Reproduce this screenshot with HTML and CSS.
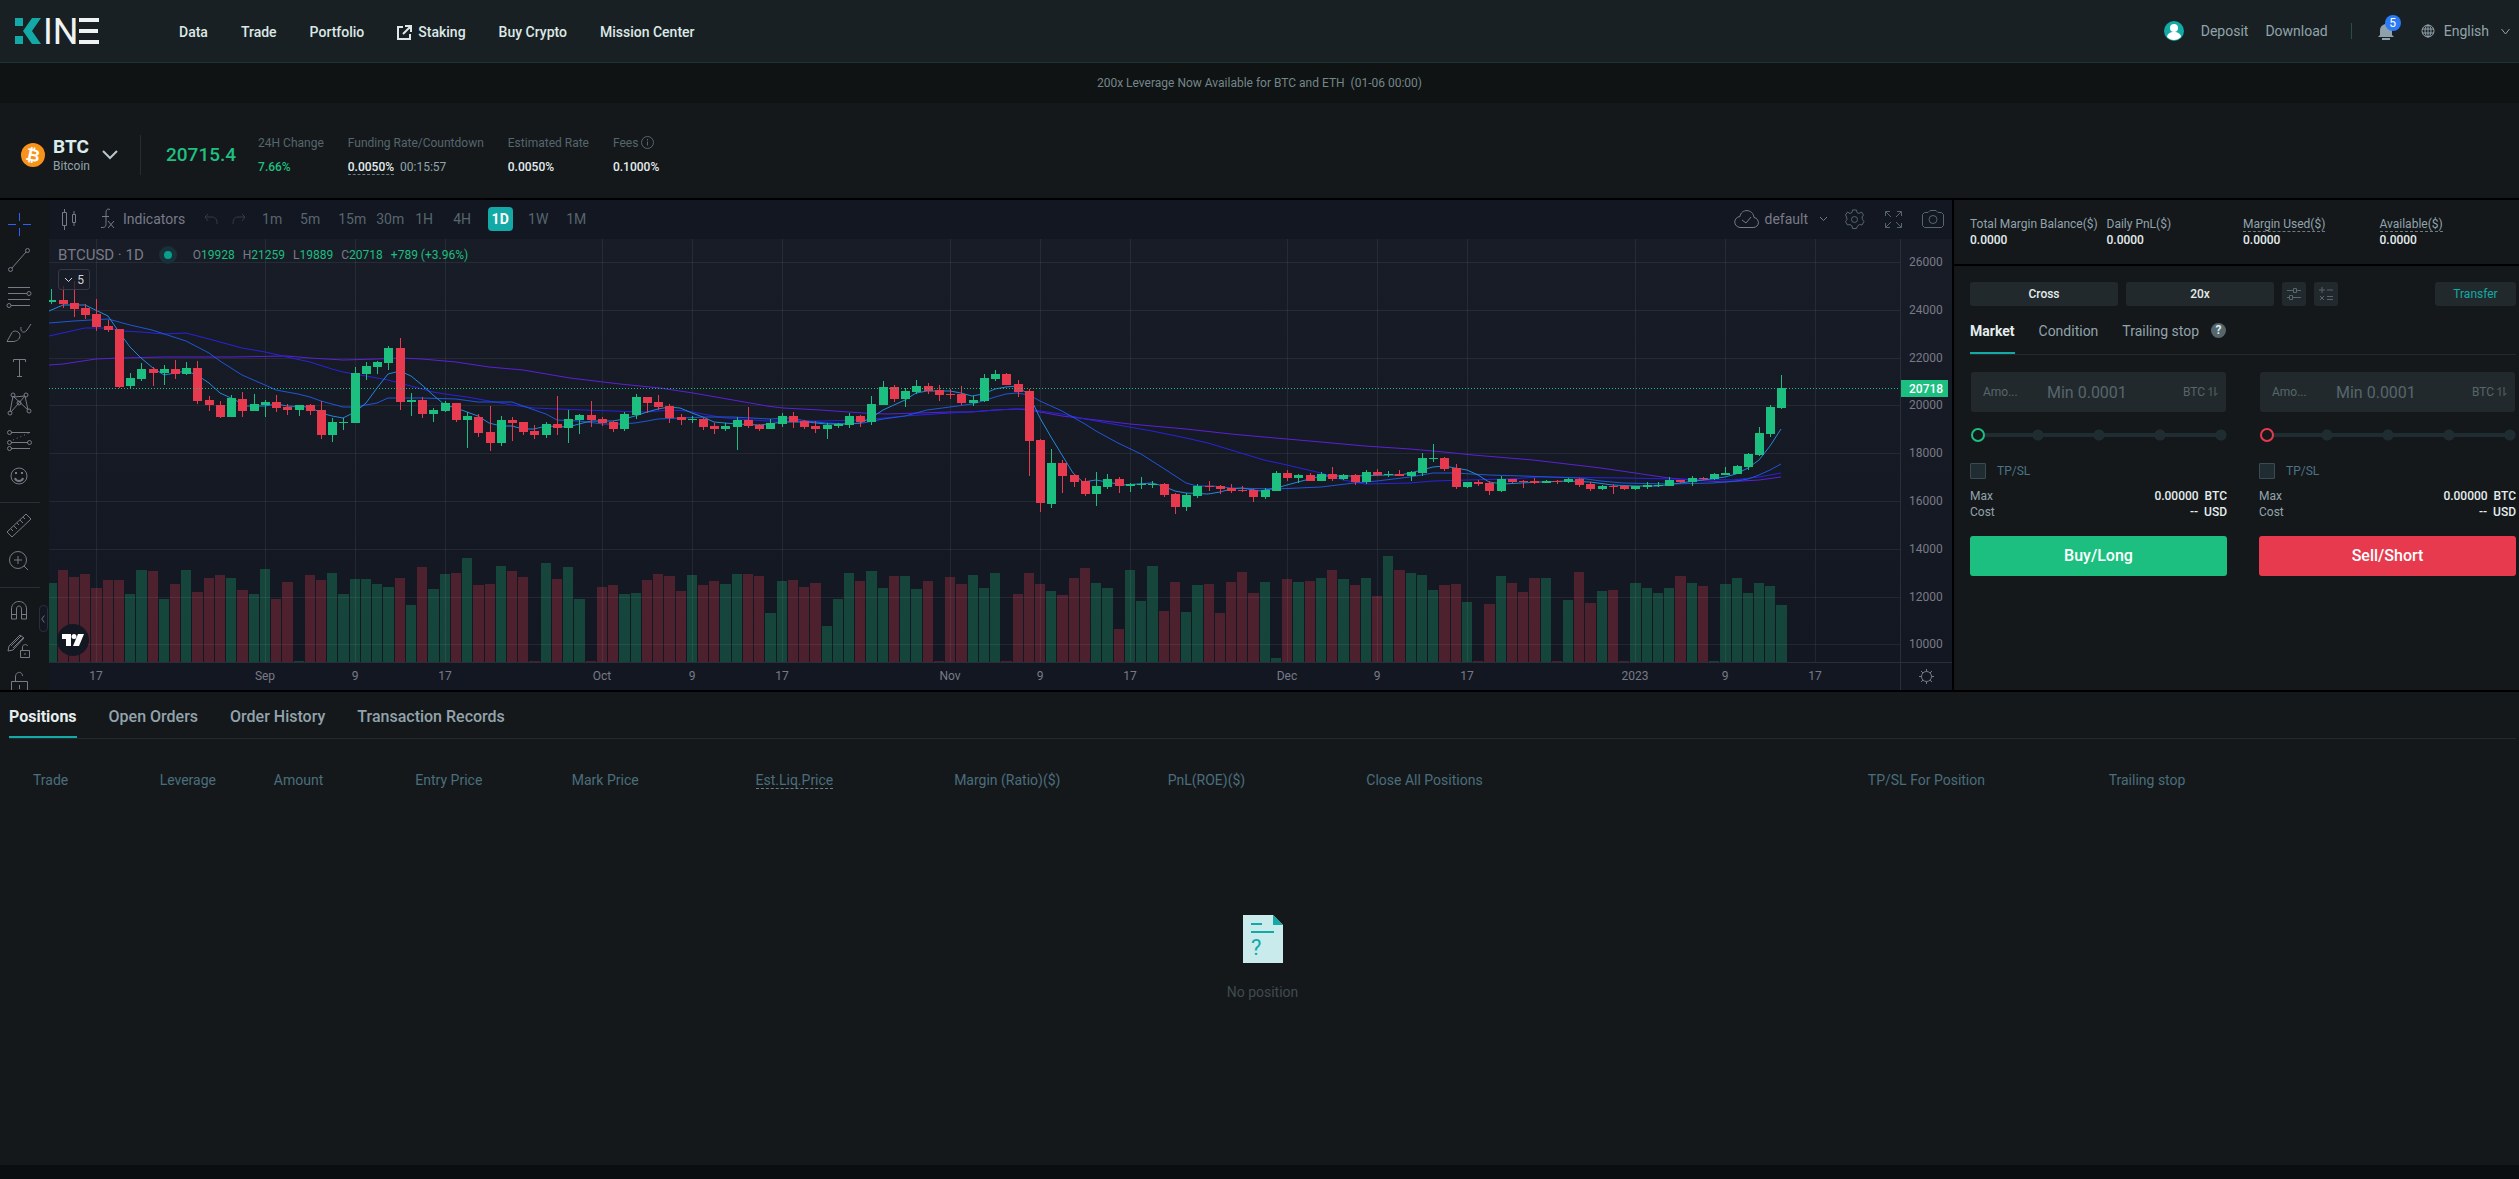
FILE: index.html
```html
<!DOCTYPE html>
<html lang="en">
<head>
    <meta charset="UTF-8">
    <meta name="viewport" content="width=device-width, initial-scale=1.0">
    <title>BTC 20715.4 | Kine</title>
    <link rel="stylesheet" href="styles.css">
</head>
<body>
    <header class="site-header">
        <a href="#" class="logo" aria-label="Kine">
            <svg width="86" height="28" viewBox="0 0 86 28">
                <path fill="#12a9a6" d="M0 1h8v8H0zM0 19h8v8H0zM17 1h9l-9 13 9 13h-9L8 14z"/>
                <text x="28" y="27" class="logo-text">IN</text>
                <path fill="#eef3f3" d="M64 1h20v4H64zM64 12h19v4H64zM64 23h20v4H64z"/>
            </svg>
        </a>
        <nav class="main-nav">
            <a href="#">Data</a>
            <a href="#">Trade</a>
            <a href="#">Portfolio</a>
            <a href="#" class="with-icon">
                <svg width="15" height="15" viewBox="0 0 15 15" fill="none" stroke="currentColor" stroke-width="2"><path d="M6 2H1v12h12V9M8 1h6v6M14 1L6 9"/></svg>
                Staking
            </a>
            <a href="#">Buy Crypto</a>
            <a href="#">Mission Center</a>
        </nav>
        <div class="user-nav">
            <a href="#" class="avatar" aria-label="Account">
                <svg width="20" height="20" viewBox="0 0 20 20"><circle cx="10" cy="10" r="10" fill="#12a9a6"/><circle cx="10" cy="7" r="4" fill="#fff"/><path d="M3 16c0-3 3-5 7-5s7 2 7 5c-2 2-4 3-7 3s-5-1-7-3z" fill="#fff"/></svg>
            </a>
            <a href="#">Deposit</a>
            <a href="#">Download</a>
            <span class="nav-divider"></span>
            <button class="bell" aria-label="Notifications">
                <svg width="16" height="18" viewBox="0 0 16 18" fill="#8fa1aa"><path d="M7 1h2v1c3 1 5 3 5 6v5l2 2H0l2-2V8c0-3 2-5 5-6zM4 16h8v2H4z"/></svg>
                <span class="bell-count">5</span>
            </button>
            <button class="language">
                <svg width="14" height="14" viewBox="0 0 14 14" fill="none" stroke="currentColor"><circle cx="7" cy="7" r="6"/><ellipse cx="7" cy="7" rx="3" ry="6"/><path d="M1 5h12M1 9h12M7 1v12"/></svg>
                English
                <svg class="language-arrow" width="9" height="7" viewBox="0 0 9 7" fill="none" stroke="currentColor"><path d="M0.500 1l4 5 4-5"/></svg>
            </button>
        </div>
    </header>

    <div class="announcement">200x Leverage Now Available for BTC and ETH&nbsp; (01-06 00:00)</div>

    <section class="ticker">
        <button class="pair">
            <svg width="24" height="24" viewBox="0 0 24 24"><circle cx="12" cy="12" r="12" fill="#f7931a"/><text x="12" y="18" class="coin-sign" transform="rotate(12 12 12)">₿</text></svg>
            <span class="pair-name">
                <strong>BTC</strong>
                <span>Bitcoin</span>
            </span>
            <svg class="pair-arrow" width="16" height="10" viewBox="0 0 16 10" fill="none" stroke="currentColor" stroke-width="2"><path d="M1 1l7 7 7-7"/></svg>
        </button>
        <span class="ticker-divider"></span>
        <span class="last-price">20715.4</span>
        <dl class="ticker-stats">
            <div><dt>24H Change</dt><dd class="up">7.66%</dd></div>
            <div><dt>Funding Rate/Countdown</dt><dd><span class="hint">0.0050%</span><span class="countdown">00:15:57</span></dd></div>
            <div><dt>Estimated Rate</dt><dd>0.0050%</dd></div>
            <div><dt>Fees <svg width="13" height="13" viewBox="0 0 13 13" fill="none" stroke="currentColor"><circle cx="6.500" cy="6.500" r="6"/><path d="M6.500 5.500v4M6.500 3v1.500"/></svg></dt><dd>0.1000%</dd></div>
        </dl>
    </section>

    <main class="workspace">
        <section class="chart">
            <div class="draw-tools">
                <button aria-label="Cross"><svg class="cross" viewBox="0 0 28 28"><path d="M14.500 3v8M14.500 18v8M3 14.500h8M18 14.500h8"/></svg></button>
                <button aria-label="Trend line"><svg viewBox="0 0 28 28"><path d="M7 22L21 6"/><circle cx="5.500" cy="23.500" r="2"/><circle cx="22.500" cy="4.500" r="2"/></svg></button>
                <button aria-label="Fib retracement"><svg viewBox="0 0 28 28"><path d="M3 5.500h22M3 11.500h19M3 17.500h22M6 23.500h19"/><circle cx="24" cy="11.500" r="2"/><circle cx="4" cy="23.500" r="2"/></svg></button>
                <button aria-label="Brush"><svg viewBox="0 0 28 28"><path d="M2 23.500l5-9c2-3 8-1 8 3s-4 6-7 6zM16 9c-1 5 3 7 6 3l4-6"/></svg></button>
                <button aria-label="Text"><svg viewBox="0 0 28 28"><path d="M8.500 8V5.500h12V8M14.500 5.500v17M12 22.500h5"/></svg></button>
                <button aria-label="Pattern"><svg viewBox="0 0 28 28"><path d="M5 22L8 6l15 14L20 6 6 22M9 7l11-1"/><circle cx="8" cy="5" r="2"/><circle cx="21" cy="5" r="2"/><circle cx="5" cy="23" r="2"/><circle cx="24" cy="21" r="2"/><circle cx="14" cy="13" r="2"/></svg></button>
                <button aria-label="Prediction"><svg viewBox="0 0 28 28"><path d="M6 6.500h19M6 16.500h17M6 22.500h19"/><path d="M8 14L24 7" stroke-dasharray="1 3"/><circle cx="4.500" cy="6.500" r="2"/><circle cx="4.500" cy="16.500" r="2"/><circle cx="4.500" cy="22.500" r="2"/><circle cx="24.500" cy="16.500" r="2"/></svg></button>
                <button aria-label="Icons"><svg viewBox="0 0 28 28"><circle cx="14" cy="14" r="8"/><path d="M10 16c1 4 7 4 8 0M11 10v2M17 10v2" stroke-width="2"/></svg></button>
                <hr>
                <button aria-label="Measure"><svg viewBox="0 0 28 28"><path d="M2 21L21 3l5 5L7 26zM6 18l2 2M9 15l3 3M12 12l2 2M15 9l3 3M18 6l2 2"/></svg></button>
                <button aria-label="Zoom in"><svg viewBox="0 0 28 28"><circle cx="13" cy="13" r="8.500"/><path d="M13 9v8M9 13h8M19 19l4 4"/></svg></button>
                <hr>
                <button aria-label="Magnet"><svg viewBox="0 0 28 28"><path d="M6.500 23V13c0-10 15-10 15 0v10h-5V13c0-4-5-4-5 0v10zM6.500 18.500h5M16.500 18.500h5"/></svg></button>
                <button aria-label="Keep drawing"><svg viewBox="0 0 28 28"><path d="M4 14L15 3l4 3L8 18l-5 1zM6 14l10-10M8 16L18 6M15.500 18.500h9v7h-9zM17.500 18v-3c0-3 5-3 5-1M20 21v2"/></svg></button>
                <button aria-label="Lock drawings"><svg viewBox="0 0 28 28"><path d="M6.500 13.500h16v12h-16zM10.500 13V9c0-6 7-6 7-1M14.500 17v4"/></svg></button>
                <button class="fold" aria-label="Hide drawing tools"><svg viewBox="0 0 8 10"><path d="M5 1L2 5l3 4"/></svg></button>
            </div>

            <div class="chart-body">
                <div class="chart-toolbar">
                    <button class="candle-type" aria-label="Candles"><svg width="16" height="22" viewBox="0 0 16 22"><path d="M1.500 4.500h4v13h-4zM3.500 1v3M3.500 18v4M11.500 6.500h3v8h-3zM13 3v3M13 15v3"/></svg></button>
                    <button class="indicators">
                        <svg width="16" height="22" viewBox="0 0 16 22"><path d="M10 1.500c-3-1-4 0-4 4v10c0 4-2 4-5 4M2 8.500h7M8 13l6 7M14 13l-6 7"/></svg>
                        Indicators
                    </button>
                    <button class="history" aria-label="Undo"><svg width="14" height="12" viewBox="0 0 14 12"><path d="M4 1L1 4l3 4M1 4h7c4 0 5 3 5 7"/></svg></button>
                    <button class="history" aria-label="Redo"><svg width="14" height="12" viewBox="0 0 14 12"><path d="M10 1l3 3-3 4M13 4H6c-4 0-5 3-5 7"/></svg></button>
                    <div class="intervals">
                        <button>1m</button>
                        <button>5m</button>
                        <button class="wide">15m</button>
                        <button class="tight">30m</button>
                        <button>1H</button>
                        <button>4H</button>
                        <button class="active"><span>1D</span></button>
                        <button>1W</button>
                        <button>1M</button>
                    </div>
                    <div class="chart-actions">
                        <button class="layout-name">
                            <svg width="25" height="20" viewBox="0 0 25 20"><path d="M6 18.500h13c7 0 7-9 1-10-1-9-13-9-14-1-7 1-7 10 0 11zM8 11l4 3 5-6"/></svg>
                            default
                            <svg width="9" height="6" viewBox="0 0 9 6"><path d="M1 1l3.500 3.500L8 1"/></svg>
                        </button>
                        <button aria-label="Settings"><svg width="21" height="21" viewBox="0 0 21 21"><path d="M8.500 1h4l.5 2.500 2 1 2.500-1.500 2 3-1.500 2 .5 2.500 1.500 2-2 3.500-2.500-.5-2 1.500-1 2.500h-4l-.5-2.500-2-1.500-2.500.5-2-3.500L3 10.500 2.500 8 1.500 6l2-3L6 4.500l2-1z"/><circle cx="10.500" cy="10.500" r="3"/></svg></button>
                        <button aria-label="Fullscreen"><svg width="17" height="17" viewBox="0 0 17 17"><path d="M.5 5V.5H5M12 .5h4.500V5M16.500 12v4.500H12M5 16.500H.5V12M1 1l5 5M16 1l-5 5M16 16l-5-5M1 16l5-5"/></svg></button>
                        <button aria-label="Snapshot"><svg width="22" height="18" viewBox="0 0 22 18"><path d="M2.500 2.500H6l2-2h6l2 2h3.500l2 2v11l-2 2h-17l-2-2v-11z"/><circle cx="11" cy="9.500" r="4"/></svg></button>
                    </div>
                </div>

                <div class="plot-row">
                    <div class="plot">
                        <svg id="plot" class="plot-svg"></svg>
                        <div class="legend">
                            <span class="legend-symbol">BTCUSD · 1D</span>
                            <span class="market-dot"></span>
                            <span>O<b>19928</b></span>
                            <span>H<b>21259</b></span>
                            <span>L<b>19889</b></span>
                            <span>C<b>20718</b></span>
                            <span><b>+789 (+3.96%)</b></span>
                        </div>
                        <button class="study-count">
                            <svg width="9" height="6" viewBox="0 0 9 6"><path d="M1 1l3.500 3.500L8 1"/></svg>
                            5
                        </button>
                        <a href="#" class="tv-badge" aria-label="TradingView"><svg width="22" height="12" viewBox="0 0 22 12" fill="#fff"><path d="M0 0h9v12H4V5H0zM16 0h6l-5 12h-6z"/><circle cx="12" cy="2.500" r="2.500"/></svg></a>
                    </div>
                    <svg id="price-axis" class="price-axis"></svg>
                </div>
                <div class="time-row">
                    <svg id="time-axis" class="time-axis"></svg>
                    <button class="axis-settings" aria-label="Axis settings"><svg width="15" height="15" viewBox="0 0 15 15"><circle cx="7.500" cy="7.500" r="5"/><path d="M7.500 0v2.500M7.500 12.500V15M0 7.500h2.500M12.500 7.500H15M2 2l2 2M11 11l2 2M2 13l2-2M11 4l2-2"/></svg></button>
                </div>
            </div>
        </section>

        <aside class="trade-panel">
            <dl class="balances">
                <div><dt>Total Margin Balance($)</dt><dd>0.0000</dd></div>
                <div><dt>Daily PnL($)</dt><dd>0.0000</dd></div>
                <div><dt><span class="hint">Margin Used($)</span></dt><dd>0.0000</dd></div>
                <div><dt><span class="hint">Available($)</span></dt><dd>0.0000</dd></div>
            </dl>

            <div class="order-panel">
                <div class="margin-row">
                    <button class="margin-mode">Cross</button>
                    <button class="margin-mode">20x</button>
                    <button class="tool-btn" aria-label="Preferences"><svg width="14" height="14" viewBox="0 0 14 14"><path d="M0 3.500h6M10 3.500h4M6.500 1.500h3v4h-3zM0 10.500h2M6 10.500h8M2.500 8.500h3v4h-3z"/></svg></button>
                    <button class="tool-btn" aria-label="Calculator"><svg width="14" height="14" viewBox="0 0 14 14"><path d="M0 3h6M3 0v6M8 3h6M1 9l4 4M5 9l-4 4M8 9.500h6M8 12.500h6"/></svg></button>
                    <button class="transfer">Transfer</button>
                </div>

                <div class="order-types">
                    <button class="active">Market</button>
                    <button>Condition</button>
                    <button>Trailing stop <span class="help">?</span></button>
                </div>

                <div class="order-forms">
                    <form class="order-form buy">
                        <div class="amount-box">
                            <label for="buyAmount">Amo...</label>
                            <input type="text" id="buyAmount" placeholder="Min 0.0001">
                            <button type="button">BTC <svg width="10" height="9" viewBox="0 0 10 9"><path d="M0.500 3l2.500-2.500V9M9.500 6L7 8.500V0"/></svg></button>
                        </div>
                        <input type="range" class="amount-slider" aria-label="Buy amount" min="0" max="100" value="0">
                        <label class="tpsl"><input type="checkbox"> TP/SL</label>
                        <div class="order-line"><span>Max</span><b>0.00000&nbsp; BTC</b></div>
                        <div class="order-line"><span>Cost</span><b>--&nbsp; USD</b></div>
                        <button type="submit" class="submit-btn">Buy/Long</button>
                    </form>
                    <form class="order-form sell">
                        <div class="amount-box">
                            <label for="sellAmount">Amo...</label>
                            <input type="text" id="sellAmount" placeholder="Min 0.0001">
                            <button type="button">BTC <svg width="10" height="9" viewBox="0 0 10 9"><path d="M0.500 3l2.500-2.500V9M9.500 6L7 8.500V0"/></svg></button>
                        </div>
                        <input type="range" class="amount-slider" aria-label="Sell amount" min="0" max="100" value="0">
                        <label class="tpsl"><input type="checkbox"> TP/SL</label>
                        <div class="order-line"><span>Max</span><b>0.00000&nbsp; BTC</b></div>
                        <div class="order-line"><span>Cost</span><b>--&nbsp; USD</b></div>
                        <button type="submit" class="submit-btn">Sell/Short</button>
                    </form>
                </div>
            </div>
        </aside>
    </main>

    <section class="positions">
        <div class="position-tabs">
            <button class="active">Positions</button>
            <button>Open Orders</button>
            <button>Order History</button>
            <button>Transaction Records</button>
        </div>
        <table class="position-table">
            <thead>
                <tr>
                    <th>Trade</th>
                    <th>Leverage</th>
                    <th>Amount</th>
                    <th>Entry Price</th>
                    <th>Mark Price</th>
                    <th><span class="hint">Est.Liq.Price</span></th>
                    <th>Margin (Ratio)($)</th>
                    <th>PnL(ROE)($)</th>
                    <th>Close All Positions</th>
                    <th>TP/SL For Position</th>
                    <th>Trailing stop</th>
                </tr>
            </thead>
        </table>
        <div class="empty">
            <svg width="40" height="48" viewBox="0 0 40 48"><path fill="#c9ebeb" d="M0 0h30l10 10v38H0z"/><path fill="#12a9a6" d="M30 0l10 10H30zM8 8h11v2H8zM8 16h23v2H8z"/><text x="8" y="40" class="empty-mark">?</text></svg>
            <p>No position</p>
        </div>
    </section>
    <div class="page-end"></div>

    <script src="chart.js"></script>
</body>
</html>
```
FILE: styles.css
```css
* {
    margin: 0;
    padding: 0;
    box-sizing: border-box;
}

body {
    font-family: Roboto, 'Liberation Sans', sans-serif;
    font-size: 12px;
    line-height: 16px;
    background: #000;
    color: #e4eded;
    min-height: 100vh;
    display: flex;
    flex-direction: column;
}

a {
    color: inherit;
    text-decoration: none;
}

button {
    font: inherit;
    color: inherit;
    background: none;
    border: none;
    cursor: pointer;
}

.hint {
    border-bottom: 1px dashed #6b7c83;
}

/* Header */
.site-header {
    height: 63px;
    padding: 0 9px 0 15px;
    display: flex;
    align-items: center;
    background: #182023;
    border-bottom: 1px solid #1c3434;
    font-size: 14px;
}

.logo,
.logo svg {
    display: flex;
    overflow: visible;
}

.logo-text {
    font-size: 36px;
    fill: #eef3f3;
}

.main-nav {
    display: flex;
    gap: 33px;
    margin-left: 78px;
    padding-top: 2px;
    font-weight: 500;
    color: #dde8e6;
}

.with-icon {
    display: flex;
    align-items: center;
    gap: 6px;
}

.user-nav {
    display: flex;
    align-items: center;
    gap: 17px;
    margin-left: auto;
    color: #92a3ab;
}

.avatar {
    display: flex;
}

.nav-divider {
    width: 1px;
    height: 16px;
    margin: 0 9px 0 6px;
    background: #2b4b4d;
}

.bell {
    position: relative;
    display: flex;
    margin-right: 10px;
}

.bell-count {
    position: absolute;
    top: -7px;
    right: -7px;
    width: 16px;
    height: 16px;
    border-radius: 8px;
    background: #2c7bf6;
    color: #fff;
    font-size: 12px;
}

.language {
    display: flex;
    align-items: center;
    gap: 9px;
}

.language-arrow {
    margin-left: 3px;
}

.announcement {
    height: 40px;
    line-height: 40px;
    text-align: center;
    background: #0f1313;
    color: #75868a;
}

/* Ticker */
.ticker {
    height: 95px;
    padding: 8px 21px 0;
    display: flex;
    align-items: center;
    background: #14181b;
}

.pair {
    display: flex;
    align-items: center;
    text-align: left;
}

.coin-sign {
    font: bold 17px 'DejaVu Sans', sans-serif;
    text-anchor: middle;
    fill: #fff;
}

.pair-name {
    display: flex;
    flex-direction: column;
    margin: 0 12px 0 8px;
    color: #92a3ab;
}

.pair-name strong {
    font-size: 19px;
    line-height: 22px;
    color: #dcebeb;
}

.pair-arrow {
    color: #b9c6cc;
}

.ticker-divider {
    width: 1px;
    height: 40px;
    margin: 0 25px 0 22px;
    background: #262c2f;
}

.last-price {
    font-size: 19px;
    font-weight: 500;
    color: #1fbf80;
}

.ticker-stats {
    display: flex;
    gap: 24px;
    margin-left: 22px;
}

.ticker-stats dt {
    display: flex;
    align-items: center;
    gap: 3px;
    margin-bottom: 8px;
    color: #56666d;
}

.ticker-stats dd {
    font-weight: 500;
}

.ticker-stats .up {
    color: #1fbf80;
}

.ticker-stats .countdown {
    margin-left: 6px;
    font-weight: 400;
    color: #92a3ab;
}

/* Workspace */
.workspace {
    display: flex;
    gap: 2px;
    height: 490px;
    margin: 2px 0;
}

.chart {
    flex: 1;
    min-width: 0;
    display: flex;
    color: #787b86;
}

.chart svg {
    fill: none;
    stroke: currentColor;
}

.draw-tools {
    position: relative;
    width: 49px;
    padding: 8px 0 0 5px;
    overflow: hidden;
    display: flex;
    flex-direction: column;
    align-items: flex-start;
    background: #131719;
}

.draw-tools button {
    flex: none;
    width: 28px;
    height: 36px;
}

.draw-tools svg {
    width: 28px;
    height: 28px;
}

.draw-tools .cross {
    stroke: #2962ff;
}

.draw-tools hr {
    flex: none;
    width: 40px;
    height: 1px;
    margin: 6px 0 6px -5px;
    border: none;
    background: #2a2e39;
}

.draw-tools .fold {
    position: absolute;
    left: 39px;
    top: 405px;
    width: 9px;
    height: 27px;
    border: 1px solid #2a2e39;
    border-radius: 4px;
    background: #131722;
    display: flex;
    align-items: center;
    justify-content: center;
}

.draw-tools .fold svg {
    width: 8px;
    height: 10px;
}

.chart-body {
    flex: 1;
    min-width: 0;
    display: flex;
    flex-direction: column;
    background: #131722;
}

.chart-toolbar {
    height: 39px;
    padding: 0 8px 1px 12px;
    display: flex;
    align-items: center;
    font-size: 14px;
}

.chart-toolbar button {
    display: flex;
    align-items: center;
    justify-content: center;
}

.chart-toolbar .indicators {
    gap: 7px;
    margin: 0 12px 0 23px;
}

.chart-toolbar .history {
    width: 28px;
    color: #363a45;
}

.intervals {
    display: flex;
    color: #56666d;
}

.intervals button {
    width: 38px;
}

.intervals .wide {
    width: 46px;
}

.intervals .tight {
    width: 30px;
}

.intervals .active span {
    width: 25px;
    height: 24px;
    line-height: 24px;
    border-radius: 4px;
    background: #12a9a6;
    color: #fff;
    font-weight: 700;
}

.chart-actions {
    display: flex;
    gap: 20px;
    margin-left: auto;
    color: #56666d;
}

.chart-toolbar .layout-name {
    gap: 5px;
    margin-right: -4px;
    color: #787b86;
}

.layout-name svg:last-child {
    margin-left: 6px;
}

.plot-row,
.time-row {
    display: flex;
}

.plot-row {
    height: 424px;
    border-bottom: 1px solid #2a2e39;
}

.plot {
    position: relative;
    flex: 1;
    min-width: 0;
    background: linear-gradient(#181c27, #131722);
}

.chart .plot-svg {
    display: block;
    width: 100%;
    height: 423px;
    shape-rendering: crispEdges;
    stroke: none;
}

.plot-svg .grid {
    fill: rgba(240, 243, 250, 0.07);
}

.plot-svg .up {
    fill: #1cbf7f;
}

.plot-svg .down {
    fill: #e73a4e;
}

.plot-svg .volume {
    opacity: 0.27;
}

.plot-svg polyline {
    shape-rendering: auto;
}

.plot-svg .last-line {
    stroke: #1cbf7f;
    stroke-dasharray: 1 2;
}

.legend {
    position: absolute;
    left: 9px;
    top: 7px;
    display: flex;
    align-items: center;
    gap: 8px;
}

.legend b {
    font-weight: 400;
    color: #1cbf7f;
}

.legend-symbol {
    font-size: 15px;
}

.market-dot {
    width: 18px;
    height: 18px;
    margin: 0 8px 0 7px;
    border: 5px solid #1a3038;
    border-radius: 50%;
    background: #0a9f8c;
}

.study-count {
    position: absolute;
    left: 9px;
    top: 30px;
    width: 32px;
    height: 21px;
    display: flex;
    align-items: center;
    justify-content: center;
    gap: 4px;
    border: 1px solid #363a45;
    border-radius: 3px;
    background: rgba(24, 28, 39, 0.7);
    color: #d1d4dc;
}

.tv-badge {
    position: absolute;
    left: 8px;
    bottom: 6px;
    width: 32px;
    height: 32px;
    display: flex;
    align-items: center;
    justify-content: center;
    border-radius: 50%;
    background: #131722;
}

.chart .tv-badge svg {
    fill: #fff;
    stroke: none;
}

.chart .price-axis {
    width: 52px;
    height: 423px;
    border-left: 1px solid #2a2e39;
    background: linear-gradient(#181c27, #131722);
    fill: #787b86;
    stroke: none;
}

.price-axis .last-box {
    fill: #1cbf7f;
}

.price-axis .last-text {
    fill: #fff;
    font-weight: 500;
}

.time-row {
    height: 27px;
}

.chart .time-axis {
    flex: 1;
    min-width: 0;
    height: 27px;
    fill: #787b86;
    stroke: none;
}

.time-axis text {
    text-anchor: middle;
}

.axis-settings {
    width: 52px;
    border-left: 1px solid #2a2e39;
    display: flex;
    align-items: center;
    justify-content: center;
}

/* Trade panel */
.trade-panel {
    width: 565px;
    display: flex;
    flex-direction: column;
    gap: 2px;
    color: #92a3ab;
}

.balances,
.order-panel {
    padding: 16px 3px 0 16px;
    background: #14181b;
}

.balances {
    height: 64px;
    display: grid;
    grid-template-columns: repeat(4, 1fr);
}

.balances dt {
    height: 16px;
    white-space: nowrap;
}

.balances dd {
    font-weight: 500;
    color: #e4eded;
}

.order-panel {
    flex: 1;
}

.margin-row {
    display: flex;
    gap: 8px;
}

.margin-row button {
    height: 24px;
    border-radius: 3px;
    background: #22292c;
}

.margin-row .margin-mode {
    width: 148px;
    font-weight: 500;
    color: #e4eded;
}

.margin-row .tool-btn {
    width: 24px;
    display: flex;
    align-items: center;
    justify-content: center;
    color: #56666d;
}

.tool-btn svg,
.amount-box svg {
    fill: none;
    stroke: currentColor;
}

.margin-row .transfer {
    width: 81px;
    margin-left: auto;
    color: #12a9a6;
}

.order-types {
    display: flex;
    gap: 24px;
    height: 49px;
    border-bottom: 1px solid #23292c;
    font-size: 14px;
}

.order-types button {
    display: flex;
    align-items: center;
    padding-top: 3px;
    border-bottom: 2px solid transparent;
}

.order-types .active {
    border-color: #12a9a6;
    color: #e4eded;
    font-weight: 700;
}

.help {
    width: 15px;
    height: 15px;
    margin-left: 12px;
    border-radius: 50%;
    background: #56666d;
    color: #dcebeb;
    font-size: 12px;
    line-height: 15px;
    font-weight: 700;
}

.order-forms {
    display: grid;
    grid-template-columns: repeat(2, minmax(0, 1fr));
    gap: 32px;
    padding-top: 17px;
}

.order-form {
    display: flex;
    flex-direction: column;
}

.buy {
    --side: #1cbf7f;
}

.sell {
    --side: #e73a4e;
}

.amount-box {
    height: 40px;
    margin: 0 1px;
    padding: 0 8px 0 12px;
    display: flex;
    align-items: center;
    border-radius: 3px;
    background: #22292c;
    color: #56666d;
}

.amount-box label {
    width: 64px;
}

.amount-box input {
    flex: 1;
    min-width: 0;
    border: none;
    outline: none;
    background: none;
    font: inherit;
    font-size: 16px;
    color: #e4eded;
}

.amount-box input::placeholder {
    color: #56666d;
}

/* stops every quarter of the track */
.amount-slider {
    appearance: none;
    -webkit-appearance: none;
    height: 14px;
    margin: 16px 0 0 1px;
    background:
        radial-gradient(circle, #1f2d33 5px, transparent 6px) 25% 0 / 12px 14px no-repeat,
        radial-gradient(circle, #1f2d33 5px, transparent 6px) 50% 0 / 12px 14px no-repeat,
        radial-gradient(circle, #1f2d33 5px, transparent 6px) 75% 0 / 12px 14px no-repeat,
        radial-gradient(circle, #1f2d33 5px, transparent 6px) 100% 0 / 12px 14px no-repeat,
        linear-gradient(#1f2d33, #1f2d33) 50% 5px / calc(100% - 12px) 4px no-repeat;
}

.amount-slider::-webkit-slider-thumb {
    -webkit-appearance: none;
    width: 14px;
    height: 14px;
    border: 2px solid var(--side);
    border-radius: 50%;
    background: #14181b;
}

.tpsl {
    display: flex;
    align-items: center;
    gap: 11px;
    margin: 21px 0 9px;
    color: #4b7486;
}

.tpsl input {
    appearance: none;
    -webkit-appearance: none;
    width: 16px;
    height: 16px;
    border: 1px solid #3c4a51;
    border-radius: 1px;
    background: #1f2d33;
}

.order-line {
    display: flex;
    justify-content: space-between;
}

.order-line b {
    font-weight: 500;
    color: #e4eded;
}

.submit-btn {
    height: 40px;
    margin-top: 16px;
    border-radius: 3px;
    background: var(--side);
    color: #fff;
    font-size: 16px;
    font-weight: 500;
}

/* Positions */
.positions {
    flex: 1;
    padding: 0 3px 0 9px;
    background: #14181b;
}

.position-tabs {
    display: flex;
    gap: 32px;
    height: 47px;
    border-bottom: 1px solid #23292c;
    font-size: 16px;
    font-weight: 500;
    color: #92a3ab;
}

.position-tabs button {
    padding-top: 6px;
    border-bottom: 2px solid transparent;
}

.position-tabs .active {
    border-color: #12a9a6;
    color: #e4eded;
    font-weight: 700;
}

.position-table {
    width: 100%;
    margin-top: 33px;
    padding-left: 24px;
    border-spacing: 0;
    table-layout: fixed;
    font-size: 14px;
    color: #4b6e7b;
}

.position-table th {
    font-weight: 400;
    text-align: left;
    white-space: nowrap;
}

.position-table th:nth-child(1) { width: 5.1%; }
.position-table th:nth-child(2) { width: 4.6%; }
.position-table th:nth-child(3) { width: 5.7%; }
.position-table th:nth-child(4) { width: 6.3%; }
.position-table th:nth-child(5) { width: 7.4%; }
.position-table th:nth-child(6) { width: 8%; }
.position-table th:nth-child(7) { width: 8.6%; }
.position-table th:nth-child(8) { width: 8%; }
.position-table th:nth-child(9) { width: 20.2%; }
.position-table th:nth-child(10) { width: 9.7%; }

.empty {
    display: flex;
    flex-direction: column;
    align-items: center;
    gap: 21px;
    margin-top: 127px;
    font-size: 14px;
    color: #404b50;
}

.empty-mark {
    font-size: 22px;
    fill: #12a9a6;
}

.page-end {
    height: 14px;
    background: #0b0e10;
}
```
FILE: chart.js
```js
// side, high, body top, body bottom, low, volume height
const BARS = `
g 50 61 63 65 79|r 47 61 65 69 92|r 42 64 70 78 85|r 65 69 76 80 88|r 60 75 88 92 74|r 81 87 91 93 82
r 90 90 148 149 82|g 134 139 147 149 68|g 124 130 140 142 92|r 128 130 134 147 91|g 126 130 134 146 63|r 121 130 135 140 78
g 123 129 135 136 92|r 122 129 162 165 70|r 157 161 166 172 84|r 162 166 178 179 87|g 156 159 178 178 84|r 153 160 172 178 72
g 155 165 172 172 68|g 161 163 166 178 93|r 156 163 169 173 63|r 165 168 171 176 80|g 166 166 171 177 1|r 165 166 172 176 87
r 162 171 196 200 82|g 179 183 196 203 89|g 179 183 184 191 68|g 128 134 184 184 83|g 123 127 135 141 83|g 122 123 128 135 78
g 107 109 124 131 75|r 99 109 163 171 84|g 154 161 163 177 57|r 158 161 175 179 95|g 169 171 175 183 73|g 162 164 172 173 88
r 164 164 181 183 89|g 173 177 181 209 104|r 175 178 194 198 77|r 167 193 204 212 78|g 177 181 204 207 96|r 178 181 184 202 91
r 183 183 193 196 85|r 186 192 196 200 1|g 183 185 196 199 99|r 157 185 189 196 83|g 171 180 189 204 95|g 175 176 181 195 63
r 162 176 181 188 1|r 178 180 184 187 75|r 182 183 190 193 77|g 173 175 190 192 68|g 155 158 176 180 69|r 158 158 164 174 82
r 156 163 168 171 88|r 165 167 179 184 86|r 175 178 181 186 71|g 177 180 181 184 87|r 179 180 188 191 77|r 184 187 190 195 81
g 184 187 190 192 78|g 178 181 188 211 88|r 168 181 187 189 88|r 185 186 190 192 86|g 180 184 190 190 49|g 174 177 185 188 81
r 173 177 183 189 82|r 181 182 188 190 75|r 182 187 190 194 79|g 184 186 190 200 36|g 184 185 187 189 63|g 174 177 186 189 89
r 176 177 183 188 81|g 157 165 183 186 91|g 142 148 166 166 74|r 146 148 160 163 86|g 149 152 160 168 86|g 141 147 153 155 73
r 144 147 152 155 81|r 146 151 156 162 1|r 150 155 156 160 85|r 147 155 164 166 78|g 157 161 164 167 87|g 135 139 162 163 74
g 131 135 140 142 89|r 134 135 146 146 1|r 141 145 153 158 68|r 150 152 202 237 89|r 200 201 264 273 78|g 210 224 265 269 71
r 221 224 237 254 67|r 235 236 243 248 84|r 239 242 255 257 94|g 233 247 255 267 79|g 235 240 248 250 74|r 238 240 247 254 33
g 244 245 247 253 92|g 238 245 246 250 61|g 242 245 246 249 96|r 244 245 256 258 51|r 254 255 268 275 80|g 254 256 268 272 50
g 245 247 257 259 77|r 242 247 248 252 78|r 246 247 250 255 49|r 245 249 252 254 80|r 247 251 252 253 90|r 250 251 258 263 69
g 249 251 258 260 80|g 232 234 252 252 4|r 231 234 239 242 83|g 235 236 239 244 80|r 234 236 242 242 81|g 233 235 242 242 84
r 228 235 240 242 92|g 235 236 240 241 83|r 235 236 243 246 77|g 231 233 243 245 84|r 230 233 236 237 66|g 232 235 236 238 106
r 231 235 237 237 92|g 232 233 237 242 89|g 214 219 234 237 87|g 205 219 220 223 72|r 218 219 230 232 77|r 225 229 248 250 78
g 243 243 248 249 60|r 241 243 245 247 1|r 242 244 252 256 58|g 237 240 252 253 86|r 240 240 243 244 79|r 241 242 243 249 70
r 239 242 244 245 84|g 241 242 244 244 84|r 241 242 243 245 1|g 239 240 243 244 62|r 239 240 246 248 90|r 243 245 250 252 59
g 246 247 250 251 71|r 245 247 248 255 72|r 246 247 250 251 1|g 247 247 250 251 79|g 243 246 248 250 74|g 243 246 247 248 69
g 238 241 247 247 74|r 241 241 243 244 86|g 237 239 243 247 79|r 238 239 240 241 76|g 234 235 240 241 1|g 228 234 236 236 78
g 226 227 235 235 84|g 214 215 228 231 69|g 188 194 216 217 79|g 166 168 195 198 76|g 136 149 169 170 57
`.trim().split(/[|\n]/).map(row => row.split(' '));

// moving averages, slowest first
const AVERAGES = [
    ['#5c20d8', '0,126 14,125 47,120 70,119 115,118 182,118 238,117 261,119 294,121 328,120 351,119 373,120 407,123 440,128 474,131 521,139 571,145 611,149 644,154 684,161 718,167 734,169 771,171 814,174 838,175 901,173 923,173 946,171 968,170 980,171 991,173 1013,177 1047,181 1081,185 1137,190 1182,195 1215,198 1272,203 1316,207 1361,210 1395,213 1424,216 1484,221 1552,229 1586,234 1620,239 1642,241 1676,243 1710,241 1732,238'],
    ['#2a22dc', '0,97 36,89 59,89 74,92 92,93 115,95 137,94 160,100 171,103 193,109 216,113 238,118 261,123 283,130 294,133 317,137 339,141 373,150 384,153 396,155 418,158 440,162 463,166 485,169 508,170 564,172 598,173 621,171 638,172 654,175 676,179 718,182 771,182 814,181 856,177 901,174 934,172 946,171 968,170 980,170 991,172 1013,175 1036,180 1069,186 1103,192 1137,199 1159,204 1182,211 1215,221 1238,226 1272,234 1294,241 1316,245 1361,244 1384,242 1418,241 1458,240 1491,238 1578,239 1624,240 1684,241 1710,238 1732,234'],
    ['#1f56d8', '0,84 25,82 59,80 70,83 81,86 103,91 137,102 160,114 171,122 193,136 216,146 227,151 249,155 261,158 272,162 294,168 306,168 328,164 339,159 373,159 407,160 429,163 463,163 474,167 497,175 508,181 530,182 554,185 571,185 586,184 598,182 609,180 631,179 658,178 684,178 721,180 741,179 758,182 777,184 799,185 814,184 834,180 856,177 878,171 901,168 923,165 934,162 946,158 957,155 968,154 980,156 991,162 1013,172 1036,185 1047,192 1069,204 1092,215 1114,229 1137,244 1148,247 1164,247 1182,249 1227,250 1272,248 1305,244 1328,242 1361,238 1384,234 1406,234 1440,236 1474,237 1530,239 1552,242 1574,244 1621,245 1664,244 1687,242 1699,240 1710,236 1721,231 1732,225'],
    ['#2388dc', '0,72 14,66 36,66 59,77 70,93 81,108 92,119 104,129 115,136 126,134 137,132 148,136 160,144 171,154 182,159 198,167 216,167 227,165 238,167 261,168 272,174 283,177 294,179 306,173 317,164 328,149 339,135 351,132 362,137 373,146 384,156 396,166 407,169 418,173 429,177 440,184 452,187 463,187 474,190 485,190 497,187 519,188 530,185 542,182 564,182 575,180 586,177 598,173 609,170 620,168 631,169 643,174 654,178 665,183 676,184 688,185 711,186 734,183 758,183 777,185 799,185 811,184 822,179 834,171 845,166 856,161 867,154 878,152 901,152 912,154 923,157 934,155 946,150 957,148 968,147 980,156 991,179 1002,198 1013,216 1024,234 1034,243 1047,241 1058,243 1074,246 1103,244 1114,247 1126,252 1137,254 1159,255 1171,253 1182,250 1193,249 1211,252 1227,249 1249,243 1272,237 1305,237 1339,236 1351,236 1361,234 1373,231 1384,228 1395,227 1406,229 1418,231 1429,236 1440,243 1454,245 1491,243 1519,242 1541,243 1564,246 1586,247 1609,247 1631,244 1654,241 1676,238 1687,235 1699,229 1710,221 1721,207 1732,190']
];

const DATES = [[4, '17'], [19, 'Sep'], [27, '9'], [35, '17'], [49, 'Oct'], [57, '9'], [65, '17'], [80, 'Nov'],
    [88, '9'], [96, '17'], [110, 'Dec'], [118, '9'], [126, '17'], [141, '2023'], [149, '9'], [157, '17']];

const HEIGHT = 423;
const LAST_Y = 149;

const barX = i => Math.round(2.4 + 11.234 * i);
const priceY = price => Math.round(23 + (26000 - price) * 0.0239);
const rect = (cls, x, y, w, h) => `<rect class="${cls}" x="${x}" y="${y}" width="${w}" height="${h}"/>`;

let volumes = '';
let candles = '';
BARS.forEach(([side, high, top, bottom, low, volume], i) => {
    const x = barX(i);
    const cls = side === 'g' ? 'up' : 'down';
    volumes += rect(cls + ' volume', x - 5, HEIGHT - volume, barX(i + 1) - x - 1, volume);
    candles += rect(cls, x, high, 1, low - high) + rect(cls, x - 4, top, 9, bottom - top);
});

let grid = '';
let prices = '';
for (let price = 26000; price >= 10000; price -= 2000) {
    const y = priceY(price);
    grid += rect('grid', 0, y, '100%', 1);
    prices += `<text x="8" y="${y + 4}">${price}</text>`;
}

let dates = '';
DATES.forEach(([i, label]) => {
    grid += rect('grid', barX(i), 0, 1, HEIGHT);
    dates += `<text x="${barX(i)}" y="17">${label}</text>`;
});

const lines = AVERAGES.map(([color, points]) => `<polyline points="${points}" stroke="${color}"/>`).join('');
const lastLine = `<line class="last-line" x1="0" x2="100%" y1="${LAST_Y + 0.5}" y2="${LAST_Y + 0.5}"/>`;

document.getElementById('plot').innerHTML = volumes + grid + lines + candles + lastLine;
document.getElementById('price-axis').innerHTML = prices + rect('last-box', 0, LAST_Y - 8, 47, 17) +
    `<text class="last-text" x="8" y="${LAST_Y + 5}">20718</text>`;
document.getElementById('time-axis').innerHTML = dates;
```
